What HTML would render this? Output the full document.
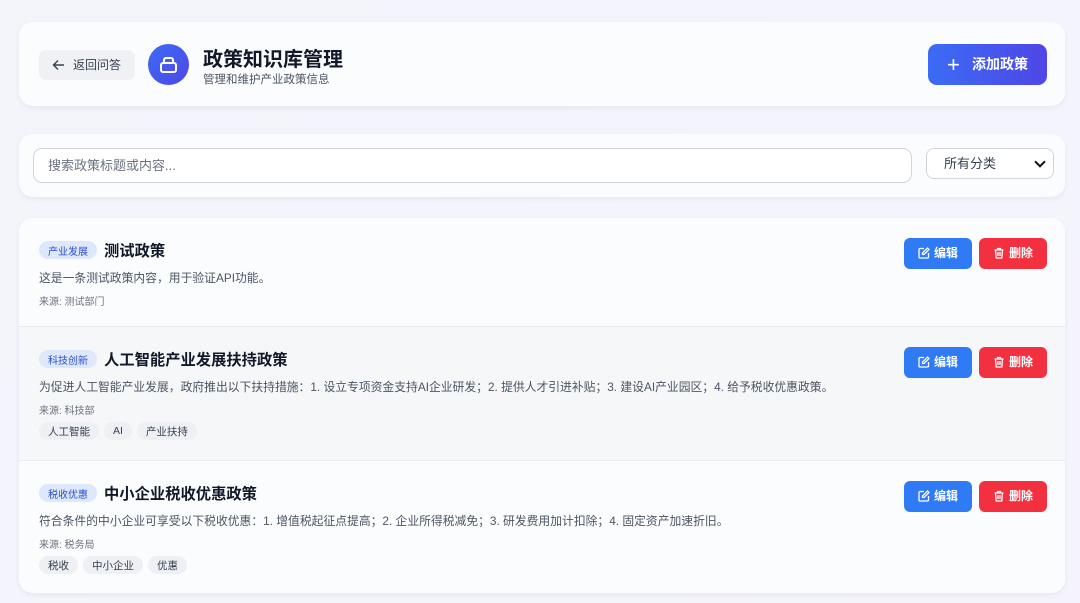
<!DOCTYPE html><html><head><meta charset="utf-8"><style>
*{box-sizing:border-box;margin:0;padding:0}
body{width:1080px;height:603px;overflow:hidden;font-family:"Liberation Sans","Noto Sans CJK SC",sans-serif;background:linear-gradient(135deg,#f3f5fb,#f5f4fd);position:relative;color:#1f2937}
.card{position:absolute;left:19px;width:1046px;background:#fbfcfe;border-radius:14px;box-shadow:0 2px 6px rgba(0,0,0,.06)}
.back{position:absolute;left:20px;top:28px;width:96px;height:30px;background:#f0f1f4;border-radius:7px;font-size:12px;color:#374151;line-height:30px;padding-left:34px}
.back svg{position:absolute;left:13px;top:9px}
.logo{position:absolute;left:129px;top:22px;width:41px;height:41px;border-radius:50%;background:linear-gradient(135deg,#3b6cf6,#4f46e5)}
.h1{position:absolute;left:184px;top:21px;font-size:20px;font-weight:bold;color:#111827}
.sub{position:absolute;left:184px;top:49px;font-size:11.5px;color:#4b5563}
.add{position:absolute;left:909px;top:22px;width:119px;height:41px;border-radius:9px;background:linear-gradient(90deg,#3b6cf6,#4f46e5);color:#fff;font-size:14px;font-weight:bold;line-height:41px;padding-left:44px}
.add:before{content:"+";position:absolute;left:19px;font-size:22px;font-weight:normal}
.inp{position:absolute;left:14px;top:14px;width:879px;height:35px;border:1px solid #d1d5db;border-radius:9px;background:#fff;font-size:13px;color:#6b7280;line-height:33px;padding-left:14px}
.sel{position:absolute;left:907px;top:14px;width:128px;height:31px;border:1px solid #d1d5db;border-radius:8px;background:#fff;font-size:13px;color:#374151;line-height:29px;padding-left:17px}
.sel:after{content:"";position:absolute;right:9px;top:9px;width:6px;height:6px;border-right:2px solid #111;border-bottom:2px solid #111;transform:rotate(45deg)}
.item{position:absolute;left:0;width:1046px;border-bottom:1px solid #e8eaef}
.badge{position:absolute;left:20px;width:58px;height:18px;border-radius:9px;background:#dde8fd;color:#2b4fc7;font-size:10px;display:flex;align-items:center;justify-content:center}
.t{position:absolute;left:85px;font-size:15.3px;font-weight:bold;color:#111827}
.d{position:absolute;left:20px;font-size:11.8px;color:#4b5563}
.s{position:absolute;left:20px;font-size:10px;color:#6b7280}
.tags{position:absolute;left:20px;display:flex;gap:5px}
.tags span{background:#eef0f3;border-radius:9px;height:18px;padding:0 9px;font-size:10.5px;color:#374151;display:flex;align-items:center}
.btn{position:absolute;height:31px;border-radius:6px;color:#fff;font-size:12px;font-weight:bold;line-height:31px;padding-left:30px}
.e{left:885px;width:68px;background:#2f7bf6}
.x{left:960px;width:68px;background:#f2303f}
.btn svg{position:absolute;left:14px;top:9px}
</style></head><body>
<div class="card" style="top:22px;height:84px">
<div class="back"><svg width="13" height="12" viewBox="0 0 13 12" fill="none" stroke="#374151" stroke-width="1.4"><path d="M12 6H1.5M6 1.5L1.5 6 6 10.5"/></svg>返回问答</div>
<div class="logo"><svg width="41" height="41" viewBox="0 0 41 41"><rect x="13" y="19" width="15" height="9" rx="2" fill="none" stroke="#fff" stroke-width="2"/><path d="M16 19v-3a2 2 0 0 1 2-2h5a2 2 0 0 1 2 2v3" fill="none" stroke="#fff" stroke-width="2"/></svg></div>
<div class="h1">政策知识库管理</div>
<div class="sub">管理和维护产业政策信息</div>
<div class="add">添加政策</div>
</div>
<div class="card" style="top:134px;height:63px">
<div class="inp">搜索政策标题或内容...</div>
<div class="sel">所有分类</div>
</div>
<div class="card" style="top:218px;height:375px;overflow:hidden">
<div class="item" style="top:0;height:109px;background:#fbfcfe">
<div class="badge" style="top:23px">产业发展</div><div class="t" style="top:21px">测试政策</div>
<div class="d" style="top:51px">这是一条测试政策内容，用于验证API功能。</div>
<div class="s" style="top:75px">来源: 测试部门</div>
<div class="btn e" style="top:20px"><svg width="12" height="12" viewBox="0 0 12 12" fill="none" stroke="#fff" stroke-width="1.3"><path d="M6 1.5H2a1 1 0 0 0-1 1V10a1 1 0 0 0 1 1h7.5a1 1 0 0 0 1-1V6"/><path d="M9.5 1l1.5 1.5L6 7.5H4.5V6z"/></svg>编辑</div>
<div class="btn x" style="top:20px"><svg width="12" height="12" viewBox="0 0 12 12" fill="none" stroke="#fff" stroke-width="1.3"><path d="M1.5 3h9M4.5 3V1.5h3V3M2.5 3l.7 8h5.6l.7-8M5 5v4M7 5v4"/></svg>删除</div>
</div>
<div class="item" style="top:109px;height:134px;background:#f6f7f9">
<div class="badge" style="top:23px">科技创新</div><div class="t" style="top:21px">人工智能产业发展扶持政策</div>
<div class="d" style="top:51px">为促进人工智能产业发展，政府推出以下扶持措施：1. 设立专项资金支持AI企业研发；2. 提供人才引进补贴；3. 建设AI产业园区；4. 给予税收优惠政策。</div>
<div class="s" style="top:75px">来源: 科技部</div>
<div class="tags" style="top:95px"><span>人工智能</span><span>AI</span><span>产业扶持</span></div>
<div class="btn e" style="top:20px"><svg width="12" height="12" viewBox="0 0 12 12" fill="none" stroke="#fff" stroke-width="1.3"><path d="M6 1.5H2a1 1 0 0 0-1 1V10a1 1 0 0 0 1 1h7.5a1 1 0 0 0 1-1V6"/><path d="M9.5 1l1.5 1.5L6 7.5H4.5V6z"/></svg>编辑</div>
<div class="btn x" style="top:20px"><svg width="12" height="12" viewBox="0 0 12 12" fill="none" stroke="#fff" stroke-width="1.3"><path d="M1.5 3h9M4.5 3V1.5h3V3M2.5 3l.7 8h5.6l.7-8M5 5v4M7 5v4"/></svg>删除</div>
</div>
<div class="item" style="top:243px;height:133px;background:#fbfcfe;border:0">
<div class="badge" style="top:23px">税收优惠</div><div class="t" style="top:21px">中小企业税收优惠政策</div>
<div class="d" style="top:51px">符合条件的中小企业可享受以下税收优惠：1. 增值税起征点提高；2. 企业所得税减免；3. 研发费用加计扣除；4. 固定资产加速折旧。</div>
<div class="s" style="top:75px">来源: 税务局</div>
<div class="tags" style="top:95px"><span>税收</span><span>中小企业</span><span>优惠</span></div>
<div class="btn e" style="top:20px"><svg width="12" height="12" viewBox="0 0 12 12" fill="none" stroke="#fff" stroke-width="1.3"><path d="M6 1.5H2a1 1 0 0 0-1 1V10a1 1 0 0 0 1 1h7.5a1 1 0 0 0 1-1V6"/><path d="M9.5 1l1.5 1.5L6 7.5H4.5V6z"/></svg>编辑</div>
<div class="btn x" style="top:20px"><svg width="12" height="12" viewBox="0 0 12 12" fill="none" stroke="#fff" stroke-width="1.3"><path d="M1.5 3h9M4.5 3V1.5h3V3M2.5 3l.7 8h5.6l.7-8M5 5v4M7 5v4"/></svg>删除</div>
</div>
</div>
</body></html>
